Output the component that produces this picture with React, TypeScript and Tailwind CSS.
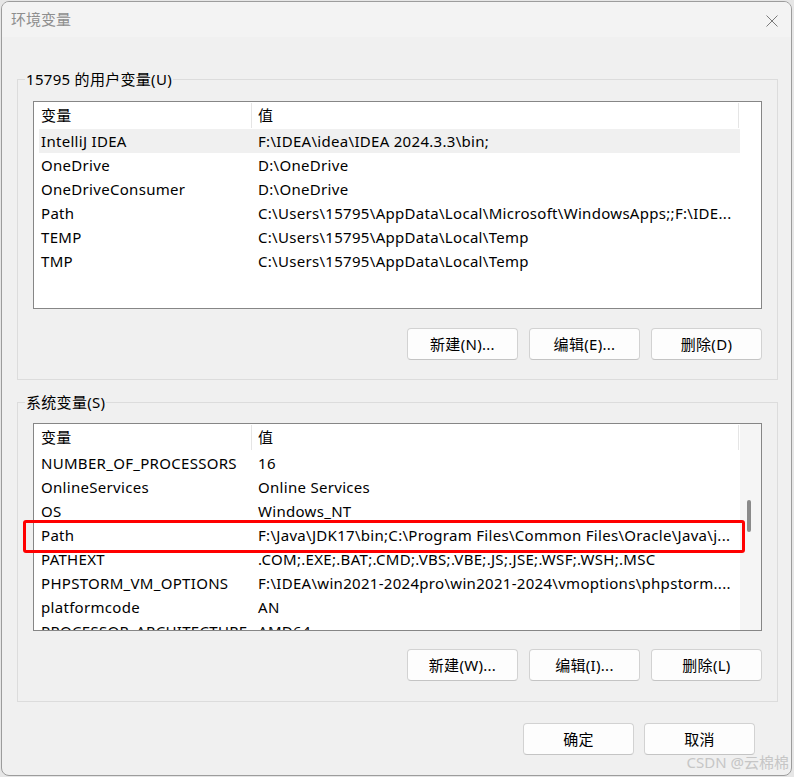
import React from "react";

type Row = [string, string];

const userVars: Row[] = [
  ["IntelliJ IDEA", "F:\\IDEA\\idea\\IDEA 2024.3.3\\bin;"],
  ["OneDrive", "D:\\OneDrive"],
  ["OneDriveConsumer", "D:\\OneDrive"],
  ["Path", "C:\\Users\\15795\\AppData\\Local\\Microsoft\\WindowsApps;;F:\\IDE..."],
  ["TEMP", "C:\\Users\\15795\\AppData\\Local\\Temp"],
  ["TMP", "C:\\Users\\15795\\AppData\\Local\\Temp"],
];

const sysVars: Row[] = [
  ["NUMBER_OF_PROCESSORS", "16"],
  ["OnlineServices", "Online Services"],
  ["OS", "Windows_NT"],
  ["Path", "F:\\Java\\JDK17\\bin;C:\\Program Files\\Common Files\\Oracle\\Java\\j..."],
  ["PATHEXT", ".COM;.EXE;.BAT;.CMD;.VBS;.VBE;.JS;.JSE;.WSF;.WSH;.MSC"],
  ["PHPSTORM_VM_OPTIONS", "F:\\IDEA\\win2021-2024pro\\win2021-2024\\vmoptions\\phpstorm...."],
  ["platformcode", "AN"],
  ["PROCESSOR_ARCHITECTURE", "AMD64"],
];

function ListView({ rows, highlight, scroll }: { rows: Row[]; highlight?: number; scroll?: boolean }) {
  return (
    <div className="flex h-[208px] w-[729px] overflow-hidden border border-[#868686] bg-white">
      <div className="flex w-[706px] flex-col pl-[5px]">
        <div className="flex h-[27px] shrink-0 items-center">
          <div className="flex h-[25px] w-[213px] items-center border-r border-[#e5e5e5] pl-[2px]">变量</div>
          <div className="flex h-[25px] w-[487px] items-center border-r border-[#e5e5e5] pl-[6px]">值</div>
        </div>
        {rows.map((r, i) => (
          <div
            key={i}
            className={
              "flex h-[24px] shrink-0 items-center " + (i === highlight ? "bg-[#f0f0f0]" : "")
            }
          >
            <div className="w-[213px] shrink-0 overflow-hidden whitespace-nowrap pl-[2px]">{r[0]}</div>
            <div className="min-w-0 flex-1 overflow-hidden whitespace-nowrap pl-[6px]">{r[1]}</div>
          </div>
        ))}
      </div>
      <div className={"flex flex-1 flex-col " + (scroll ? "bg-[#f5f5f5]" : "")}>
        {scroll && <div className="ml-[7px] mt-[76px] h-[32px] w-[4px] rounded-full bg-[#8a8a8a]" />}
      </div>
    </div>
  );
}

function Btn({ label }: { label: string }) {
  return (
    <div className="flex h-[32px] w-[111px] items-center justify-center rounded-[4px] border border-[#d2d2d2] border-b-[#c4c4c4] bg-[#fdfdfd] text-[15px] text-black">
      {label}
    </div>
  );
}

function Group({
  label,
  children,
  className,
}: {
  label: string;
  children: React.ReactNode;
  className: string;
}) {
  return (
    <div className={"relative w-[761px] border border-[#dcdcdc] px-[15px] " + className}>
      <span className="absolute left-[7px] top-[-11px] bg-[#f0f0f0] px-[1px] leading-[20px] text-black">
        {label}
      </span>
      {children}
    </div>
  );
}

export default function App() {
  return (
    <div className="h-[777px] w-[794px] overflow-hidden bg-[#e6e6e6] pl-[1px] pt-[1px] font-['Noto_Sans','Noto_Sans_CJK_SC',sans-serif] text-[15px] tracking-[0.3px] text-black">
      <div className="relative flex h-[775px] w-[791px] flex-col overflow-hidden rounded-[8px] border border-[#9c9c9c] bg-[#f0f0f0]">
        {/* title bar */}
        <div className="flex h-[35px] shrink-0 items-center justify-between bg-[#f3f3f3] pl-[9px] pr-[13px]">
          <span className="text-[15px] tracking-normal text-[#8e8e8e]">环境变量</span>
          <svg width="12" height="12" viewBox="0 0 12 12" className="mt-[2px]">
            <path d="M0.5 0.5 L11.5 11.5 M11.5 0.5 L0.5 11.5" stroke="#7a7a7a" strokeWidth="1" fill="none" />
          </svg>
        </div>

        <div className="flex flex-col pl-[15px]">
          <Group label="15795 的用户变量(U)" className="mt-[42px] pb-[19px] pt-[21px]">
            <ListView rows={userVars} highlight={0} />
            <div className="mt-[19px] flex justify-end gap-[11px]">
              <Btn label="新建(N)..." />
              <Btn label="编辑(E)..." />
              <Btn label="删除(D)" />
            </div>
          </Group>

          <Group label="系统变量(S)" className="mt-[22px] pb-[20px] pt-[20px]">
            <ListView rows={sysVars} scroll />
            <div className="mt-[18px] flex justify-end gap-[11px]">
              <Btn label="新建(W)..." />
              <Btn label="编辑(I)..." />
              <Btn label="删除(L)" />
            </div>
          </Group>

          <div className="mt-[21px] flex justify-end gap-[10px] pr-[36px]">
            <Btn label="确定" />
            <Btn label="取消" />
          </div>
        </div>

        {/* red annotation box */}
        <div className="absolute left-[21px] top-[518px] h-[33px] w-[722px] rounded-[3px] border-[3px] border-[#ff0000]" />

        {/* watermark */}
        <div className="absolute bottom-[3px] right-[2px] text-[15px] leading-[20px] tracking-normal text-[#c6c6c6]">
          CSDN @云棉棉
        </div>
      </div>
    </div>
  );
}
